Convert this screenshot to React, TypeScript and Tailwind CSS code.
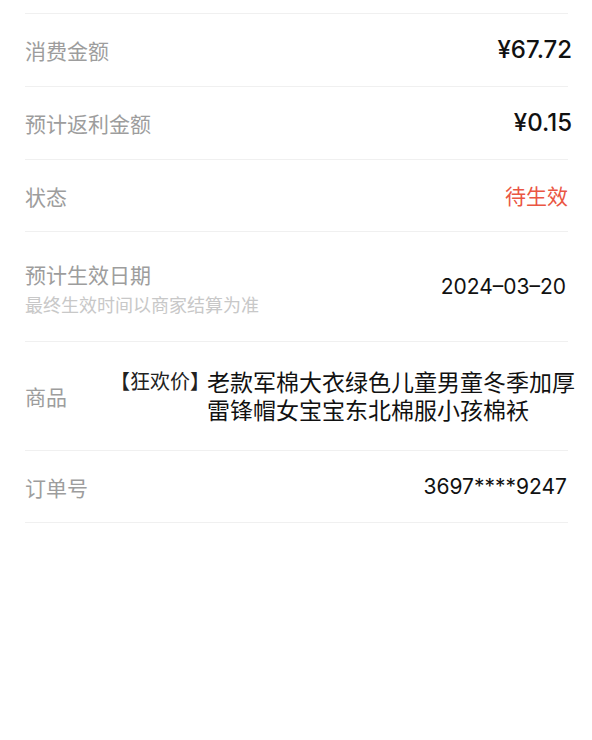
import React from 'react';

const cjk = "font-['Noto_Sans_CJK_SC',sans-serif]";
const num = "font-['Inter','Liberation_Sans',sans-serif]";

interface RowProps {
  label: React.ReactNode;
  value: React.ReactNode;
  h: string;
}

const Row: React.FC<RowProps> = ({ label, value, h }) => (
  <div className={`flex items-center justify-between border-b border-[#f0f0f0] ${h}`}>
    {label}
    {value}
  </div>
);

const Label = ({ children }: { children: React.ReactNode }) => (
  <span className={`${cjk} text-[21px] leading-[28px] text-[#9d9d9d]`}>{children}</span>
);

export default function App() {
  return (
    <div className="w-[592px] h-[740px] bg-white overflow-hidden">
      <div className="pt-[13px] pl-[25px] pr-[24px]">
        <div className="border-t border-[#f0f0f0]" />

        <Row
          h="h-[73px]"
          label={<Label>消费金额</Label>}
          value={
            <span className={`${num} -mr-[4px] text-[24px] font-medium text-[#111]`}>¥67.72</span>
          }
        />
        <Row
          h="h-[73px]"
          label={<Label>预计返利金额</Label>}
          value={
            <span className={`${num} -mr-[4px] text-[24px] font-medium text-[#111]`}>¥0.15</span>
          }
        />
        <Row
          h="h-[72px]"
          label={<Label>状态</Label>}
          value={<span className={`${cjk} text-[21px] text-[#ea5643]`}>待生效</span>}
        />
        <Row
          h="h-[110px]"
          label={
            <div className="flex flex-col pt-[2px]">
              <Label>预计生效日期</Label>
              <span className={`${cjk} mt-[4px] text-[18px] leading-[24px] text-[#c8c8c8]`}>
                最终生效时间以商家结算为准
              </span>
            </div>
          }
          value={<span className={`${num} mr-[2px] text-[21px] text-[#111]`}>2024–03–20</span>}
        />
        <Row
          h="h-[109px]"
          label={
            <div className="w-[83px] shrink-0">
              <Label>商品</Label>
            </div>
          }
          value={
            <div className="flex flex-1 items-start -mr-[16px] pb-[2px]">
              <span className={`${cjk} w-[99px] shrink-0 whitespace-nowrap pl-[2px] text-[20px] leading-[28px] text-[#222]`}>
                【狂欢价】
              </span>
              <span className={`${cjk} w-[375px] shrink-0 text-[23px] leading-[28px] text-[#111]`}>
                老款军棉大衣绿色儿童男童冬季加厚雷锋帽女宝宝东北棉服小孩棉袄
              </span>
            </div>
          }
        />
        <Row
          h="h-[72px]"
          label={<Label>订单号</Label>}
          value={<span className={`${num} mr-[1px] text-[21px] text-[#111]`}>3697****9247</span>}
        />
      </div>
    </div>
  );
}
